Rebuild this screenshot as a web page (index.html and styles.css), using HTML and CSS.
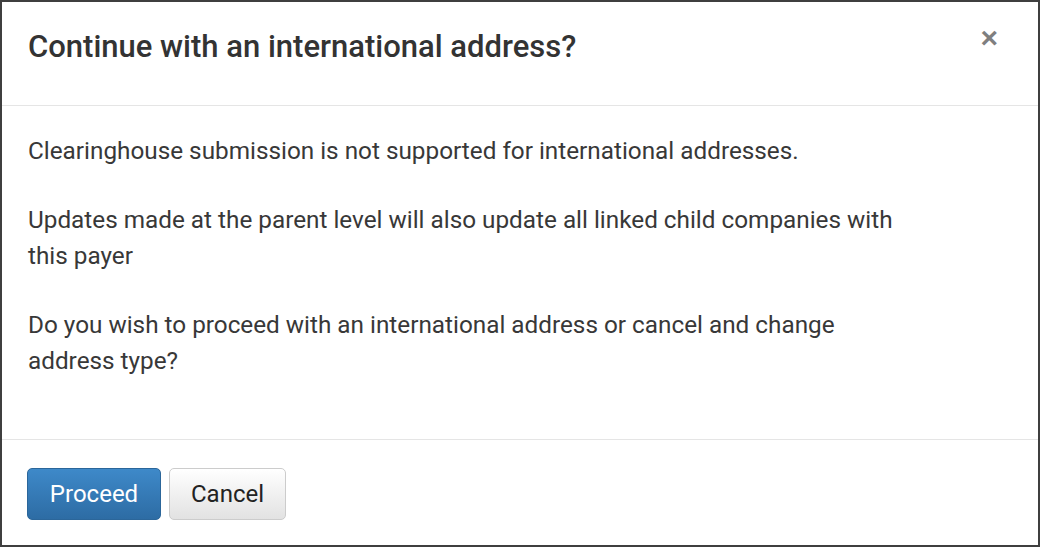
FILE: index.html
```html
<!DOCTYPE html>
<html lang="en">
<head>
  <meta charset="UTF-8" />
  <meta name="viewport" content="width=device-width, initial-scale=1.0" />
  <title>Continue with an international address?</title>
  <link rel="stylesheet" href="styles.css">
</head>
<body>
  <div class="modal">
    <div class="modal-header">
      <h4 class="modal-title">Continue with an international address?</h4>
      <button class="close" type="button">&times;</button>
    </div>
    <div class="modal-body">
      <p>Clearinghouse submission is not supported for international addresses.</p>
      <p>Updates made at the parent level will also update all linked child companies with<br>this payer</p>
      <p>Do you wish to proceed with an international address or cancel and change<br>address type?</p>
    </div>
    <div class="modal-footer">
      <button class="btn btn-primary" type="button">Proceed</button>
      <button class="btn btn-default" type="button">Cancel</button>
    </div>
  </div>
</body>
</html>
```

FILE: styles.css
```css
* {
  margin: 0;
  padding: 0;
  box-sizing: border-box;
}
html, body {
  width: 100%;
  height: 100%;
  overflow: hidden;
}
body {
  font-family: Roboto, "Liberation Sans", sans-serif;
  background: #fff;
  color: #333;
}
.modal {
  display: flex;
  flex-direction: column;
  width: 1040px;
  height: 547px;
  border: 2px solid #3f3f3f;
  background: #fff;
}
.modal-header {
  display: flex;
  justify-content: space-between;
  align-items: flex-start;
  padding: 26px 26px 0 26px;
  height: 104px;
  border-bottom: 1px solid #e5e5e5;
}
.modal-title {
  font-size: 31px;
  font-weight: 500;
  line-height: 38px;
  color: #333;
}
.close {
  background: none;
  border: none;
  font-family: "Liberation Sans", Arial, sans-serif;
  font-size: 30px;
  font-weight: 700;
  line-height: 20px;
  color: #7f7f7f;
  margin-top: 0;
  margin-right: 14px;
  cursor: pointer;
}
.modal-body {
  padding: 27px 26px 27px 26px;
  height: 334px;
  border-bottom: 1px solid #e5e5e5;
}
.modal-body p {
  font-size: 24.3px;
  line-height: 36px;
  color: #383838;
  margin-bottom: 33px;
}
.modal-footer {
  display: flex;
  gap: 8px;
  padding: 28px 26px 0 25px;
}
.btn {
  font-family: Roboto, "Liberation Sans", sans-serif;
  font-size: 24px;
  height: 52px;
  border-radius: 5px;
  cursor: pointer;
}
.btn-primary {
  width: 134px;
  color: #fff;
  border: 1px solid #2b669a;
  background: linear-gradient(to bottom, #3e89c9, #2d6ca4);
}
.btn-default {
  width: 117px;
  color: #222;
  border: 1px solid #ccc;
  background: linear-gradient(to bottom, #fff, #e2e2e2);
}
```
